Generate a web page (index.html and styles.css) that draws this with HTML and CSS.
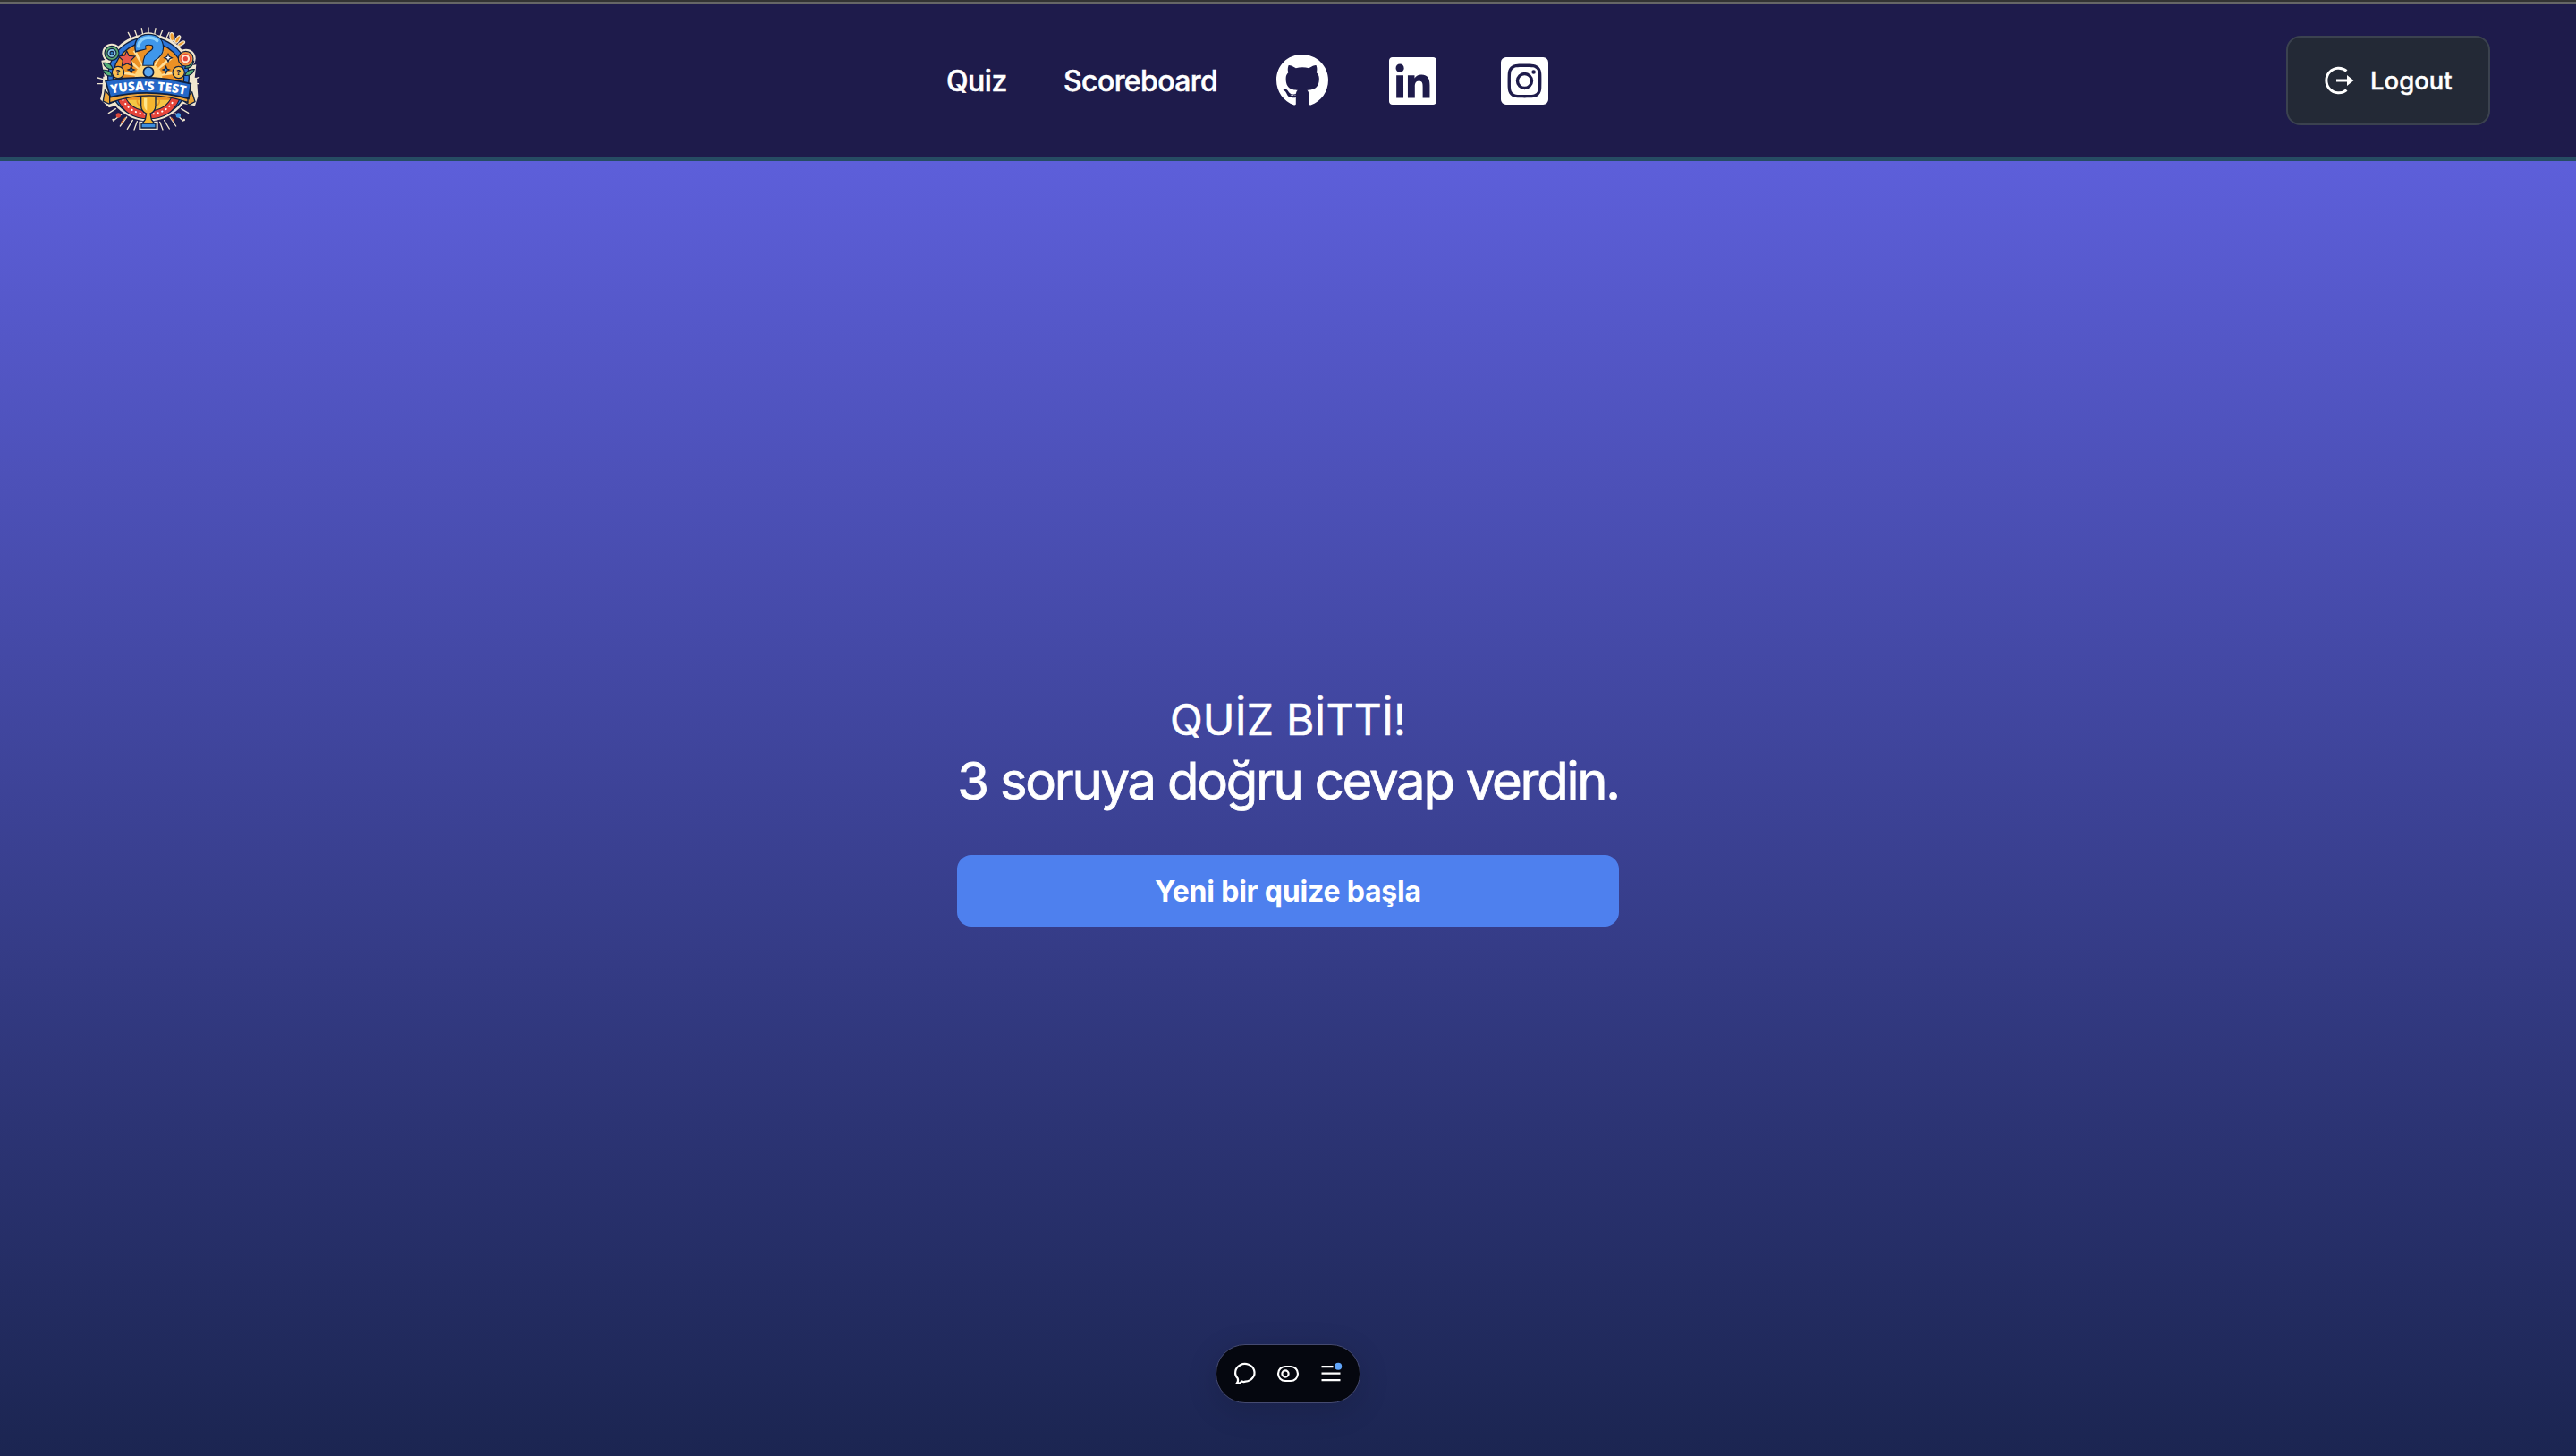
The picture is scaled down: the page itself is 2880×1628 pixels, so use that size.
FILE: index.html
```html
<!DOCTYPE html>
<html lang="tr">
<head>
<meta charset="utf-8">
<title>Yusa's Test</title>
<link rel="stylesheet" href="styles.css">
</head>
<body>
<header class="navbar">
  <a class="logo" href="#" aria-label="Yusa's Test">
    <svg viewBox="0 0 450 450" width="150" height="150">
      <g stroke="#f0e6cf" stroke-width="4" stroke-linecap="round">
        <path d="M228 48v22M205 50l4 22M182 56l7 20M160 64l10 20M252 50l-4 22M275 56l-8 20M297 64l-10 20M58 216l28 8M58 236h24M398 214l-26 10M396 236h-22M94 335l24-15M110 360l28-22M133 378l22-30M157 388l18-30M180 390l10-28M362 334l-24-14M344 360l-26-24M320 378l-20-30M298 387l-17-28M276 390l-10-26"/>
      </g>
      <circle cx="228" cy="215" r="146" fill="#f0e6cf"/>
      <g fill="#f0e6cf"><circle cx="105" cy="133" r="32"/><circle cx="354" cy="151" r="32"/><path d="M70 158l30-5 15 65-34-2zM388 172l-30 5-10 40 35 0z"/><circle cx="228" cy="116" r="52"/><path d="M76 212l150-14 164 18 4 62-10 32-80-14H160l-64 20-30-28 6-22zM196 362h64v28h-64z"/></g>
      <circle cx="228" cy="215" r="138" fill="#10203f"/>
      <circle cx="228" cy="215" r="134" fill="#2c75d8"/>
      <circle cx="228" cy="215" r="121" fill="#10203f"/>
      <circle cx="228" cy="215" r="117" fill="#ec9124"/>
      <path d="M228 215L115 185l-2 15zM228 215l-80-62 8-10zM228 215l-52-88 10-5zM228 215l80-62-8-10zM228 215l52-88-10-5zM228 215l113-30 2 15z" fill="#ffe09a"/>
      <circle cx="228" cy="215" r="46" fill="#ffd57a"/>
      <path d="M150 290a108 108 0 0 0 160 0z" fill="#f4c744"/>
      <path d="M136 282q25 58 92 58t92-58" fill="none" stroke="#10203f" stroke-width="30"/>
      <path d="M136 282q25 58 92 58t92-58" fill="none" stroke="#e5453a" stroke-width="24"/>
      <path d="M142 290q27 48 86 48t86-48" fill="none" stroke="#fff" stroke-width="6" stroke-linecap="round" stroke-dasharray="1 14"/>
      <g stroke="#10203f" stroke-width="3.500">
        <path d="M76 166q28-3 32 22-25 0-32-22zM76 190q24-2 30 20-24 2-30-20zM380 160q-26 4-30 24 25 2 30-24zM382 188q-24-2-32 20 24 4 32-20z" fill="#56b078"/>
        <circle cx="105" cy="133" r="24" fill="#5cab70"/><circle cx="105" cy="133" r="15" fill="#86c4e4"/><circle cx="105" cy="133" r="6" fill="#347fc0"/>
        <circle cx="353" cy="152" r="25" fill="#f0953f"/><circle cx="352" cy="152" r="16" fill="#ffe8d0" stroke="#e5453a"/><circle cx="352" cy="152" r="6" fill="#e5453a" stroke="#e5453a"/>
        <path d="M155 126l8 16 20 2-14 14 5 19-18-9-17 9 3-19-14-14 20-3z" fill="#e9584a"/>
        <path d="M294 136l4 9 9 4-9 4-4 9-4-9-9-4 9-4z" fill="#fff"/>
        <path d="M170 178l3 8 8 3-8 3-3 8-3-8-8-3 8-3zM287 178l3 8 8 3-8 3-3 8-3-8-8-3 8-3z" fill="#49a3dd"/>
        <circle cx="126" cy="198" r="20" fill="#f9c050"/><circle cx="329" cy="198" r="20" fill="#f9c050"/>
      </g>
      <g fill="#ef9d2e" stroke="#f0e6cf" stroke-width="4"><ellipse cx="307" cy="79" rx="7" ry="14" transform="rotate(-8 307 79)"/><ellipse cx="326" cy="87" rx="6" ry="14" transform="rotate(30 326 87)"/><ellipse cx="338" cy="101" rx="5" ry="13" transform="rotate(60 338 101)"/></g>
      <path d="M202 126q-10-38 27-38 31 0 31 27 0 18-19 27-14 7-14 34" fill="none" stroke="#10203f" stroke-width="39"/>
      <path d="M202 122q-7-34 27-34 31 0 31 27 0 18-19 27-14 7-14 31" fill="none" stroke="#3f97ea" stroke-width="32"/>
      <path d="M194 110q4-27 33-29 20 0 30 10" fill="none" stroke="#8ad0fc" stroke-width="11" stroke-linecap="round"/>
      <circle cx="228" cy="197" r="17" fill="#5aa8f0" stroke="#10203f" stroke-width="5"/>
      <path d="M82 258l-6 36 20 9 20-8zM374 264l10 32-20 10-20-14z" fill="#eaa538" stroke="#10203f" stroke-width="4"/>
      <path d="M98 268q130-42 262 8v22q-132-46-262 2z" fill="#f0a53a" stroke="#10203f" stroke-width="4"/>
      <path d="M84 226q144-26 286 10l-7 50q-132-36-263-5z" fill="#2568c8" stroke="#10203f" stroke-width="5"/>
      <path d="M205 287q-16-4-15 8 2 15 18 15M249 287q17-4 16 8-2 15-19 15" fill="none" stroke="#e99a26" stroke-width="5"/>
      <path d="M203 280h49v28q0 20-18 28l4 20 9 12h-39l9-12 4-20q-18-8-18-28z" fill="#f5b52f" stroke="#10203f" stroke-width="4"/>
      <path d="M213 284h10v42q-10-6-10-20z" fill="#ffe58a"/>
      <path d="M204 369h48v15h-48z" fill="#3d8ddb" stroke="#10203f" stroke-width="4"/>
      <circle cx="127" cy="342" r="8" fill="#df4937"/><circle cx="328" cy="342" r="8" fill="#439de5"/><circle cx="109" cy="356" r="3" fill="#f0e6cf"/><circle cx="347" cy="357" r="4" fill="#f0e6cf"/>
      <path d="M151 350l-14 16M304 350l8 10" stroke="#e87635" stroke-width="4"/>
      <path id="banner" d="M82 273q146-32 290 4" fill="none"/>
      <text class="logo-name"><textPath href="#banner" startOffset="50%">YUSA’S TEST</textPath></text>
      <text class="logo-mark" x="126" y="207">?</text><text class="logo-mark" x="329" y="207">?</text>
    </svg>
  </a>
  <nav class="links">
    <a class="link quiz" href="#">Quiz</a>
    <a class="link score" href="#">Scoreboard</a>
    <a class="social" href="#" aria-label="GitHub"><svg viewBox="0 0 496 512" width="58" height="60"><path d="M165.900 397.400c0 2-2.300 3.600-5.200 3.600-3.300.3-5.600-1.300-5.600-3.600 0-2 2.300-3.600 5.200-3.600 3-.3 5.600 1.300 5.600 3.600zm-31.100-4.500c-.7 2 1.300 4.300 4.300 4.900 2.600 1 5.600 0 6.200-2s-1.300-4.300-4.300-5.200c-2.600-.7-5.500.3-6.200 2.300zm44.200-1.700c-2.900.7-4.900 2.600-4.600 4.900.3 2 2.900 3.300 5.900 2.600 2.900-.7 4.900-2.600 4.600-4.600-.3-1.900-3-3.200-5.900-2.900zM244.800 8C106.100 8 0 113.300 0 252c0 110.900 69.800 205.800 169.500 239.200 12.800 2.300 17.300-5.600 17.300-12.100 0-6.200-.3-40.400-.3-61.400 0 0-70 15-84.700-29.800 0 0-11.400-29.100-27.800-36.600 0 0-22.900-15.700 1.600-15.400 0 0 24.900 2 38.600 25.800 21.900 38.600 58.600 27.500 72.900 20.900 2.300-16 8.800-27.100 16-33.700-55.900-6.200-112.300-14.300-112.300-110.500 0-27.500 7.600-41.300 23.600-58.900-2.600-6.500-11.100-33.300 2.600-67.900 20.900-6.500 69 27 69 27 20-5.600 41.500-8.500 62.800-8.500s42.800 2.900 62.800 8.500c0 0 48.100-33.600 69-27 13.700 34.700 5.200 61.400 2.600 67.900 16 17.700 25.800 31.500 25.800 58.900 0 96.500-58.900 104.200-114.800 110.500 9.200 7.900 17 22.900 17 46.400 0 33.700-.3 75.400-.3 83.600 0 6.500 4.600 14.400 17.300 12.100C428.200 457.800 496 362.900 496 252 496 113.300 383.500 8 244.800 8z"/></svg></a>
    <a class="social" href="#" aria-label="LinkedIn"><svg viewBox="0 32 448 448" width="53" height="53"><path d="M416 32H31.900C14.300 32 0 46.500 0 64.300v383.400C0 465.500 14.300 480 31.900 480H416c17.600 0 32-14.500 32-32.300V64.300c0-17.800-14.400-32.300-32-32.300zM135.400 416H69V202.200h66.500V416zm-33.200-243c-21.300 0-38.500-17.300-38.500-38.500S80.900 96 102.200 96c21.200 0 38.500 17.300 38.500 38.500 0 21.300-17.200 38.500-38.500 38.500zm282.100 243h-66.400V312c0-24.800-.5-56.700-34.500-56.700-34.600 0-39.900 27-39.900 54.900V416h-66.400V202.200h63.700v29.200h.9c8.900-16.800 30.600-34.500 62.900-34.500 67.200 0 79.700 44.300 79.700 101.900V416z"/></svg></a>
    <a class="social" href="#" aria-label="Instagram"><svg viewBox="0 32 448 448" width="53" height="53"><path d="M224 202.660A53.340 53.340 0 1 0 277.360 256 53.380 53.380 0 0 0 224 202.660zm124.710-41a54 54 0 0 0-30.410-30.410c-21-8.290-71-6.430-94.300-6.430s-73.250-1.930-94.310 6.430a54 54 0 0 0-30.410 30.410c-8.280 21-6.430 71.050-6.430 94.330s-1.850 73.270 6.470 94.340a54 54 0 0 0 30.410 30.410c21 8.290 71 6.430 94.310 6.430s73.240 1.930 94.300-6.430a54 54 0 0 0 30.410-30.410c8.350-21 6.430-71.050 6.430-94.330s1.920-73.260-6.430-94.330zM224 338a82 82 0 1 1 82-82 81.900 81.900 0 0 1-82 82zm85.380-148.300a19.140 19.140 0 1 1 19.130-19.140 19.100 19.100 0 0 1-19.090 19.180zM400 32H48A48 48 0 0 0 0 80v352a48 48 0 0 0 48 48h352a48 48 0 0 0 48-48V80a48 48 0 0 0-48-48zm-17.120 290c-1.290 25.630-7.140 48.340-25.850 67s-41.400 24.630-67 25.850c-26.410 1.490-105.590 1.490-132 0-25.630-1.290-48.260-7.150-67-25.850s-24.630-41.420-25.850-67c-1.490-26.420-1.490-105.610 0-132 1.290-25.630 7.070-48.340 25.850-67s41.470-24.560 67-25.780c26.410-1.490 105.590-1.490 132 0 25.630 1.290 48.330 7.150 67 25.850s24.630 41.420 25.850 67.050c1.490 26.320 1.490 105.440 0 131.880z"/></svg></a>
  </nav>
  <button class="logout">
    <svg viewBox="0 0 34 32" width="34" height="32"><path d="M25.500 5.400A13.800 13.800 0 1 0 25.500 26.600" fill="none" stroke="#fff" stroke-width="3"/><path d="M14 14.500h12V10l7.500 6-7.500 6v-4.500H14z" fill="#fff"/></svg>
    <span>Logout</span>
  </button>
</header>
<main class="result">
  <section class="summary">
    <h1 class="title">QUİZ BİTTİ!</h1>
    <p class="score-text">3 soruya doğru cevap verdin.</p>
    <button class="restart">Yeni bir quize başla</button>
  </section>
</main>
<aside class="toolbar">
  <svg viewBox="0 0 24 24" width="24" height="24"><path d="M3.800 17.300A10.700 9.800 0 1 1 12.500 20.600Q10.500 21.500 8.500 20.500Q6 23 2.600 23Q4.800 20.500 3.800 17.300z"/></svg>
  <svg viewBox="0 0 24 24" width="24" height="24"><rect x="1" y="4" width="22" height="16" rx="8"/><circle cx="9" cy="12" r="3.600"/></svg>
  <svg viewBox="0 0 24 24" width="24" height="24"><path d="M1.500 4.200h13M1.500 11.700h21M1.500 19.200h21"/><circle class="notice" cx="20.200" cy="3.800" r="4"/></svg>
</aside>
</body>
</html>
```
FILE: styles.css
```css
* { box-sizing: border-box; }
body {
  margin: 0;
  height: 1628px;
  display: flex;
  flex-direction: column;
  color: #fff;
  font-family: Inter, "Liberation Sans", sans-serif;
  border-top: 2px solid #333;
  background: #1e1b4b;
  overflow: hidden;
}
a { color: inherit; text-decoration: none; }
button { font: inherit; color: inherit; border: 0; padding: 0; }
svg { display: block; overflow: visible; }
.navbar {
  height: 178px;
  flex: none;
  display: grid;
  grid-template-columns: 1058px 1fr auto;
  align-items: center;
  padding: 0 96px 0 0;
  background: #1e1b4b;
  border-top: 2px solid #666;
  border-bottom: 4px solid #264c63;
}
.logo { margin-left: 90px; width: 150px; }
.logo-name { font: 800 41px "Open Sans", sans-serif; fill: #fff; text-anchor: middle; }
.logo-mark { font: 800 26px "Open Sans", sans-serif; fill: #10203f; text-anchor: middle; }
.links { display: flex; align-items: center; }
.link { font-size: 32px; font-weight: 500; white-space: nowrap; -webkit-text-stroke: 0.500px #fff; }
.quiz { width: 131px; letter-spacing: -0.500px; }
.score { width: 238px; letter-spacing: -0.600px; }
.social { width: 126px; }
.social + .social { width: 124px; }
.social:last-child svg { margin-left: 1px; }
.social svg { fill: #fff; }
.logout {
  width: 228px;
  height: 100px;
  display: flex;
  align-items: center;
  padding-left: 40px;
  gap: 18px;
  background: #232936;
  border: 2px solid #3b424f;
  border-radius: 16px;
  font-size: 27.500px;
  font-weight: 500;
  -webkit-text-stroke: 0.400px #fff;
}
.result {
  flex: 1;
  display: flex;
  justify-content: center;
  align-items: center;
  background: linear-gradient(#5d5fda, #1b2551);
}
.summary { width: 740px; text-align: center; }
.title { margin: 0; padding-top: 1px; font-size: 48px; font-weight: 400; line-height: 63px; letter-spacing: 0.200px; white-space: nowrap; -webkit-text-stroke: 0.500px #fff; }
.score-text { margin: 0 0 47px; padding-top: 1px; font-size: 58px; font-weight: 400; line-height: 72px; letter-spacing: -2.250px; white-space: nowrap; -webkit-text-stroke: 0.800px #fff; }
.restart { width: 740px; height: 80px; border-radius: 16px; background: #4e80ee; font-size: 32px; font-weight: 700; letter-spacing: -0.200px; }
.toolbar {
  position: fixed;
  left: 1359px;
  top: 1503px;
  width: 162px;
  height: 66px;
  display: flex;
  align-items: center;
  justify-content: center;
  gap: 24px;
  background: #05070f;
  border: 1px solid #454a70;
  border-radius: 33px;
  box-shadow: 0 8px 36px rgba(0, 0, 0, 0.140);
}
.toolbar svg { fill: none; stroke: #fff; stroke-width: 2.200; }
.toolbar .notice { fill: #60a5fa; stroke: none; }
```
